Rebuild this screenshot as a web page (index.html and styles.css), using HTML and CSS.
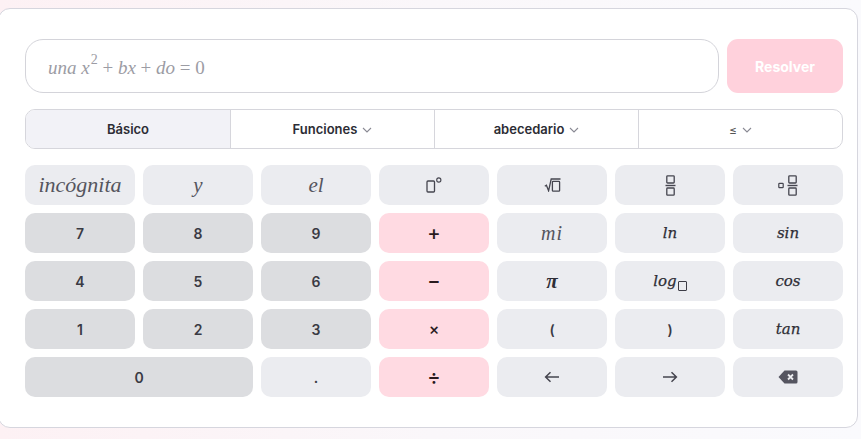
FILE: index.html
```html
<!DOCTYPE html>
<html lang="es">
<head>
<meta charset="utf-8">
<link rel="stylesheet" href="styles.css">
</head>
<body>
<div class="card">
  <div class="entry">
    <div class="input">
      <span class="ph"><i>una</i> <i>x</i><sup>2</sup> + <i>bx</i> + <i>do</i> = 0</span>
    </div>
    <button class="solve">Resolver</button>
  </div>
  <div class="tabs">
    <div class="tab active">Básico</div>
    <div class="tab">Funciones <svg class="chev" viewBox="0 0 10 6"><path d="M1 1l4 4 4-4" fill="none" stroke="#8a8a94" stroke-width="1.1"/></svg></div>
    <div class="tab">abecedario <svg class="chev" viewBox="0 0 10 6"><path d="M1 1l4 4 4-4" fill="none" stroke="#8a8a94" stroke-width="1.1"/></svg></div>
    <div class="tab"><span class="le">≤</span> <svg class="chev" viewBox="0 0 10 6"><path d="M1 1l4 4 4-4" fill="none" stroke="#8a8a94" stroke-width="1.1"/></svg></div>
  </div>
  <div class="keys">
    <div class="key lt var big">incógnita</div>
    <div class="key lt var">y</div>
    <div class="key lt var">el</div>
    <div class="key lt"><svg width="16" height="16" viewBox="0 0 16 16"><rect x="1" y="4" width="7.5" height="11" rx="1" fill="none" stroke="#45454f" stroke-width="1.3"/><circle cx="12.8" cy="3" r="2.1" fill="none" stroke="#45454f" stroke-width="1.1"/></svg></div>
    <div class="key lt"><svg width="17" height="14" viewBox="0 0 17 14"><path d="M0.8 8.2l1.6-1 2.2 5.6L7.2 1H16.5" fill="none" stroke="#45454f" stroke-width="1.3"/><rect x="8.4" y="3.4" width="7.2" height="9.8" rx="0.8" fill="none" stroke="#45454f" stroke-width="1.3"/></svg></div>
    <div class="key lt"><svg width="11" height="21" viewBox="0 0 11 21"><rect x="1.8" y="0.8" width="7.4" height="7.2" rx="0.8" fill="none" stroke="#45454f" stroke-width="1.3"/><path d="M0.5 10.5h10" stroke="#45454f" stroke-width="1.4"/><rect x="1.8" y="13" width="7.4" height="7.2" rx="0.8" fill="none" stroke="#45454f" stroke-width="1.3"/></svg></div>
    <div class="key lt"><svg width="20" height="21" viewBox="0 0 20 21"><rect x="0.8" y="8.3" width="4.4" height="4.4" rx="0.8" fill="none" stroke="#45454f" stroke-width="1.2"/><rect x="10.8" y="0.8" width="7.4" height="7.2" rx="0.8" fill="none" stroke="#45454f" stroke-width="1.3"/><path d="M9.5 10.5h10" stroke="#45454f" stroke-width="1.4"/><rect x="10.8" y="13" width="7.4" height="7.2" rx="0.8" fill="none" stroke="#45454f" stroke-width="1.3"/></svg></div>

    <div class="key dk num">7</div>
    <div class="key dk num">8</div>
    <div class="key dk num">9</div>
    <div class="key pk op">+</div>
    <div class="key lt fn mi">mi</div>
    <div class="key lt fn">ln</div>
    <div class="key lt fn">sin</div>

    <div class="key dk num">4</div>
    <div class="key dk num">5</div>
    <div class="key dk num">6</div>
    <div class="key pk op">−</div>
    <div class="key lt fn pi">π</div>
    <div class="key lt fn">log<span class="sub"></span></div>
    <div class="key lt fn">cos</div>

    <div class="key dk num">1</div>
    <div class="key dk num">2</div>
    <div class="key dk num">3</div>
    <div class="key pk op sm">×</div>
    <div class="key lt num">(</div>
    <div class="key lt num">)</div>
    <div class="key lt fn">tan</div>

    <div class="key dk num wide">0</div>
    <div class="key lt num">.</div>
    <div class="key pk op">÷</div>
    <div class="key lt"><svg width="16" height="12" viewBox="0 0 16 12"><path d="M15 6H2M6.5 1.2L1.6 6l4.9 4.8" fill="none" stroke="#45454f" stroke-width="1.5"/></svg></div>
    <div class="key lt"><svg width="16" height="12" viewBox="0 0 16 12"><path d="M1 6h13M9.5 1.2L14.4 6l-4.9 4.8" fill="none" stroke="#45454f" stroke-width="1.5"/></svg></div>
    <div class="key lt"><svg width="20" height="14" viewBox="0 0 20 14"><path d="M6.5 0.5H18a1.5 1.5 0 0 1 1.5 1.5v10a1.5 1.5 0 0 1-1.5 1.5H6.5L0.5 7z" fill="#555560"/><path d="M10 4.5l5 5M15 4.5l-5 5" stroke="#ecedf0" stroke-width="1.8"/></svg></div>
  </div>
</div>
</body>
</html>
```
FILE: styles.css
```css
html, body {
  margin: 0;
  padding: 0;
}
body {
  width: 861px;
  height: 439px;
  overflow: hidden;
  background: linear-gradient(90deg, #fdf1f4 0%, #faf7fa 50%, #fafafd 100%);
  font-family: Inter, "Noto Sans", sans-serif;
}
.card {
  box-sizing: border-box;
  margin: 8px 3px 0 -2px;
  width: 860px;
  height: 420px;
  background: #ffffff;
  border: 1px solid #d6d6de;
  border-radius: 12px;
  padding: 30px 14px 0 26px;
  display: flex;
  flex-direction: column;
}
.entry {
  display: flex;
  gap: 8px;
  height: 54px;
}
.input {
  flex: 1;
  box-sizing: border-box;
  border: 1px solid #d4d4da;
  border-radius: 18px;
  display: flex;
  align-items: center;
  padding-left: 22px;
}
.ph {
  font-family: "Liberation Serif", "DejaVu Serif", serif;
  font-size: 19px;
  color: #9c9ca4;
  padding-top: 3px;
}
.ph sup {
  font-size: 14px;
  vertical-align: 0;
  position: relative;
  top: -10px;
  margin-left: 1px;
}
.solve {
  width: 116px;
  border: none;
  border-radius: 11px;
  background: #ffd1dc;
  color: #ffffff;
  font-family: Inter, sans-serif;
  font-weight: 700;
  font-size: 14px;
  padding: 0;
}
.tabs {
  margin-top: 16px;
  height: 40px;
  box-sizing: border-box;
  border: 1px solid #d6d6dc;
  border-radius: 10px;
  display: grid;
  grid-template-columns: repeat(4, 1fr);
  overflow: hidden;
}
.tab {
  display: flex;
  align-items: center;
  justify-content: center;
  gap: 5px;
  font-size: 13px;
  font-weight: 600;
  color: #2c2c34;
  border-left: 1px solid #d6d6dc;
}
.tab:first-child {
  border-left: none;
}
.tab.active {
  background: #f2f2f7;
}
.chev {
  width: 10px;
  height: 6px;
  margin-top: 1px;
}
.le {
  font-weight: 400;
  color: #555;
  font-size: 12px;
}
.keys {
  margin-top: 16px;
  display: grid;
  grid-template-columns: repeat(7, 110px);
  grid-auto-rows: 40px;
  gap: 8px;
}
.key {
  border-radius: 10px;
  display: flex;
  align-items: center;
  justify-content: center;
  color: #3a3a44;
}
.key.lt { background: #ebecf0; }
.key.dk { background: #dcdde0; }
.key.pk { background: #ffdae2; }
.key.wide { grid-column: span 2; }
.num {
  font-family: Inter, sans-serif;
  font-weight: 600;
  font-size: 14px;
}
.op {
  font-family: Inter, sans-serif;
  font-size: 20px;
  color: #2a1a1e;
  font-weight: 500;
}
.op.sm { font-size: 16px; }
.var {
  font-family: "Liberation Serif", serif;
  font-style: italic;
  font-size: 21px;
  color: #55555e;
}
.var.big { font-size: 22px; }
.fn {
  font-family: "DejaVu Serif", serif;
  font-style: italic;
  font-size: 15px;
  color: #2e2e36;
  -webkit-text-stroke: 0.25px #2e2e36;
}
.fn.mi {
  font-family: "Liberation Serif", serif;
  font-size: 20px;
  color: #55555e;
  letter-spacing: 1px;
  -webkit-text-stroke: 0;
}
.fn.pi {
  font-family: "Liberation Serif", serif;
  font-weight: 700;
  font-size: 21px;
  -webkit-text-stroke: 0;
}
.sub {
  display: inline-block;
  width: 7px;
  height: 8px;
  border: 1.3px solid #3c3c46;
  border-radius: 1px;
  margin-left: 1px;
  position: relative;
  top: 5px;
}
```
